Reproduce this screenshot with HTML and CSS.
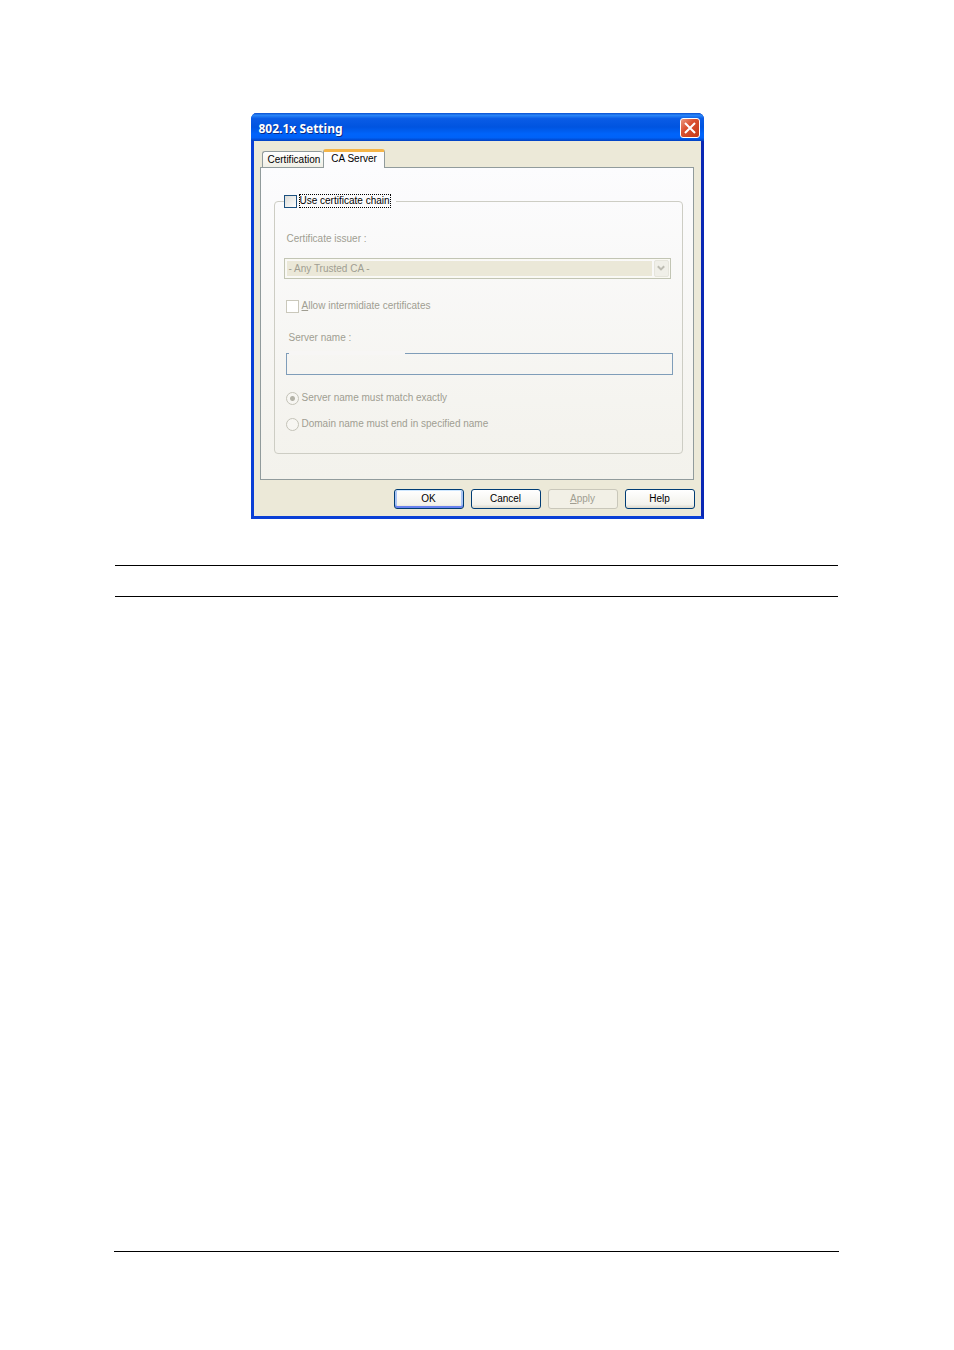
FILE: index.html
```html
<!DOCTYPE html>
<html lang="en">

<head>
    <meta charset="UTF-8">
    <meta name="viewport" content="width=device-width, initial-scale=1.0">
    <title>802.1x Setting</title>
    <link rel="stylesheet" href="styles.css">
</head>

<body>
    <main class="page">
        <form class="dialog">
            <div class="title-bar">
                <h1 class="title">802.1x Setting</h1>
                <button type="button" class="close" aria-label="Close">
                    <svg width="12" height="12" viewBox="0 0 12 12"><path d="M1 1l10 10M11 1l-10 10" stroke="#fff" stroke-width="2" /></svg>
                </button>
            </div>

            <div class="dialog-body">
                <div class="tabs" role="tablist">
                    <button type="button" class="tab" role="tab">Certification</button>
                    <button type="button" class="tab active" role="tab" aria-selected="true">CA Server</button>
                </div>

                <div class="panel">
                    <fieldset class="group">
                        <legend class="legend">
                            <input type="checkbox" class="check" id="chain">
                            <label for="chain" class="focused">Use certificate chain</label>
                        </legend>

                        <label class="field-label" for="issuer">Certificate issuer :</label>
                        <div class="select-box">
                            <select id="issuer" class="select" disabled>
                                <option>- Any Trusted CA -</option>
                            </select>
                            <span class="arrow">
                                <svg width="8" height="7" viewBox="0 0 8 7"><path d="M.8 1.2L4 4.4l3.2-3.2" fill="none" stroke="#bdbcb2" stroke-width="2" /></svg>
                            </span>
                        </div>

                        <div class="option allow">
                            <input type="checkbox" class="check" id="allow" disabled>
                            <label for="allow"><u>A</u>llow intermidiate certificates</label>
                        </div>

                        <label class="field-label server-label" for="server">Server name :</label>
                        <div class="server-box">
                            <input type="text" class="server" id="server" disabled>
                        </div>

                        <div class="option exact">
                            <input type="radio" class="radio" name="match" id="exact" checked disabled>
                            <label for="exact">Server name must match exactly</label>
                        </div>
                        <div class="option domain">
                            <input type="radio" class="radio" name="match" id="domain" disabled>
                            <label for="domain">Domain name must end in specified name</label>
                        </div>
                    </fieldset>
                </div>

                <div class="buttons">
                    <button type="button" class="btn default">OK</button>
                    <button type="button" class="btn">Cancel</button>
                    <button type="button" class="btn" disabled><u>A</u>pply</button>
                    <button type="button" class="btn">Help</button>
                </div>
            </div>
        </form>

        <div class="note"></div>
        <footer class="footer"></footer>
    </main>
</body>

</html>
```

FILE: styles.css
```css
/* Page */

* {
    box-sizing: border-box;
}

body {
    margin: 0;
    background-color: #fff;
    font-family: "Liberation Sans", Arial, sans-serif;
    font-size: 10px;
    line-height: 14px;
    color: #000;
}

button,
input,
select {
    margin: 0;
    font: inherit;
}

.page {
    display: flex;
    flex-direction: column;
    min-height: 100vh;
    padding: 113px 115px 98px;
}

/* Dialog window */

.dialog {
    align-self: center;
    width: 100%;
    max-width: 453px;
    border: 3px solid #0a3fd6;
    border-top: 0;
    border-right-color: #0a28b4;
    border-radius: 6px 6px 0 0;
    background-color: #0a3fd6;
}

.title-bar {
    display: flex;
    align-items: center;
    justify-content: space-between;
    height: 28px;
    margin: 0 -3px;
    padding: 2px 4px 0 8px;
    border-radius: 6px 6px 0 0;
    background: linear-gradient(#0a4fd0, #2a86f8 8%, #0a5ce6 20%, #0054e0 50%, #0064fb 75%, #0062f8 88%, #0240c0);
}

.title {
    margin: 0;
    padding-top: 2px;
    font-family: "Noto Sans", sans-serif;
    font-size: 12px;
    line-height: 16px;
    font-weight: 700;
    color: #fff;
    text-shadow: 1px 1px #0a2a86;
}

.close {
    display: flex;
    align-items: center;
    justify-content: center;
    width: 20px;
    height: 20px;
    padding: 0;
    border: 1px solid #fff;
    border-radius: 3px;
    background: linear-gradient(135deg, #ec9a80, #da5030 40%, #c43a18);
}

.dialog-body {
    padding: 8px 6px 7px;
    background-color: #ece9d8;
}

/* Tabs */

.tabs {
    display: flex;
    align-items: flex-end;
    padding-left: 2px;
}

.tab {
    height: 16px;
    padding: 0 3px 0 5px;
    border: 1px solid #919b9c;
    border-right: 0;
    border-bottom: 0;
    border-radius: 3px 3px 0 0;
    background: linear-gradient(#fff, #f0efe6);
    color: #000;
}

.tab.active {
    position: relative;
    height: 19px;
    margin-bottom: -1px;
    padding: 0 7px 2px;
    border-top: 3px solid #f5b548;
    border-right: 1px solid #919b9c;
    background: #fcfcfe;
}

.panel {
    margin-right: 1px;
    padding: 26px 10px 25px 13px;
    border: 1px solid #919b9c;
    background: linear-gradient(#fcfcfe, #f4f3ee 85%, #f3f2ec);
}

/* Certificate group */

.group {
    min-width: 0;
    margin: 0;
    padding: 0 9px 22px;
    border: 1px solid #cdcdc4;
    border-radius: 4px;
    color: #a09e92;
}

.legend {
    display: flex;
    align-items: center;
    gap: 2px;
    height: 14px;
    padding: 0 5px 0 0;
    color: #000;
}

.focused {
    outline: 1px dotted #000;
    outline-offset: -1px;
    padding: 0 1px;
}

.check,
.radio {
    appearance: none;
    width: 13px;
    height: 13px;
    border: 1px solid #1c5180;
    background: linear-gradient(135deg, #dcdcd7, #fff);
}

.check:disabled {
    border-color: #cac8bb;
    background: #fff;
}

.radio {
    border-color: #c4c3b8;
    border-radius: 50%;
    background: #f7f6f2;
}

.radio:checked {
    background: radial-gradient(circle, #b4b3a8 2px, #f7f6f2 3px);
}

.field-label {
    display: block;
    margin: 24px 0 12px 3px;
}

.select-box {
    position: relative;
    margin-right: 2px;
}

.select {
    display: block;
    appearance: none;
    width: 100%;
    height: 21px;
    padding: 2px 18px 2px 2px;
    border: 1px solid #c2c5b4;
    border-radius: 0;
    background: #ebe8d8 content-box;
    box-shadow: inset 0 0 0 1px #faf9f2;
    color: #a09e92;
    text-indent: 2px;
    opacity: 1;
}

/* Drop-down arrow over the right end of the box */

.arrow {
    position: absolute;
    top: 2px;
    right: 2px;
    display: flex;
    align-items: center;
    justify-content: center;
    width: 15px;
    height: 17px;
    border: 1px solid #e6e5dc;
    border-radius: 2px;
    background: #f0efe8;
    pointer-events: none;
}

.option {
    display: flex;
    align-items: center;
    gap: 3px;
    height: 14px;
    margin-left: 2px;
}

.allow {
    margin-top: 20px;
}

.server-label {
    margin: 18px 0 8px 5px;
}

.server-box {
    position: relative;
    margin-left: 2px;
}

.server-box::before {
    content: "";
    position: absolute;
    top: -2px;
    left: 3px;
    width: 30%;
    height: 4px;
    background: #f7f6f5;
}

.server {
    display: block;
    width: 100%;
    height: 22px;
    padding: 2px;
    border: 1px solid #7f9db9;
    background: transparent;
}

.exact {
    margin-top: 16px;
}

.domain {
    margin-top: 12px;
}

/* Dialog buttons */

.buttons {
    display: flex;
    justify-content: flex-end;
    gap: 7px;
    margin-top: 9px;
}

.btn {
    width: 70px;
    height: 20px;
    padding: 0;
    border: 1px solid #003c74;
    border-radius: 3px;
    background: linear-gradient(#fff, #f3f2ec 80%, #dcd8cc);
    color: #000;
}

.btn.default {
    box-shadow: inset 0 1px #cee7ff, inset 0 -2px #6982ee, inset 2px 0 #a9c4f5, inset -2px 0 #a9c4f5;
}

.btn:disabled {
    border-color: #c9c7ba;
    background: #f2f0e6;
    color: #a09e92;
}

/* Note rules and page footer */

.note {
    height: 32px;
    margin: 46px 1px 0 0;
    border-top: 1px solid #000;
    border-bottom: 1px solid #000;
}

.footer {
    margin: auto 0 0 -1px;
    border-top: 1px solid #000;
}
```
